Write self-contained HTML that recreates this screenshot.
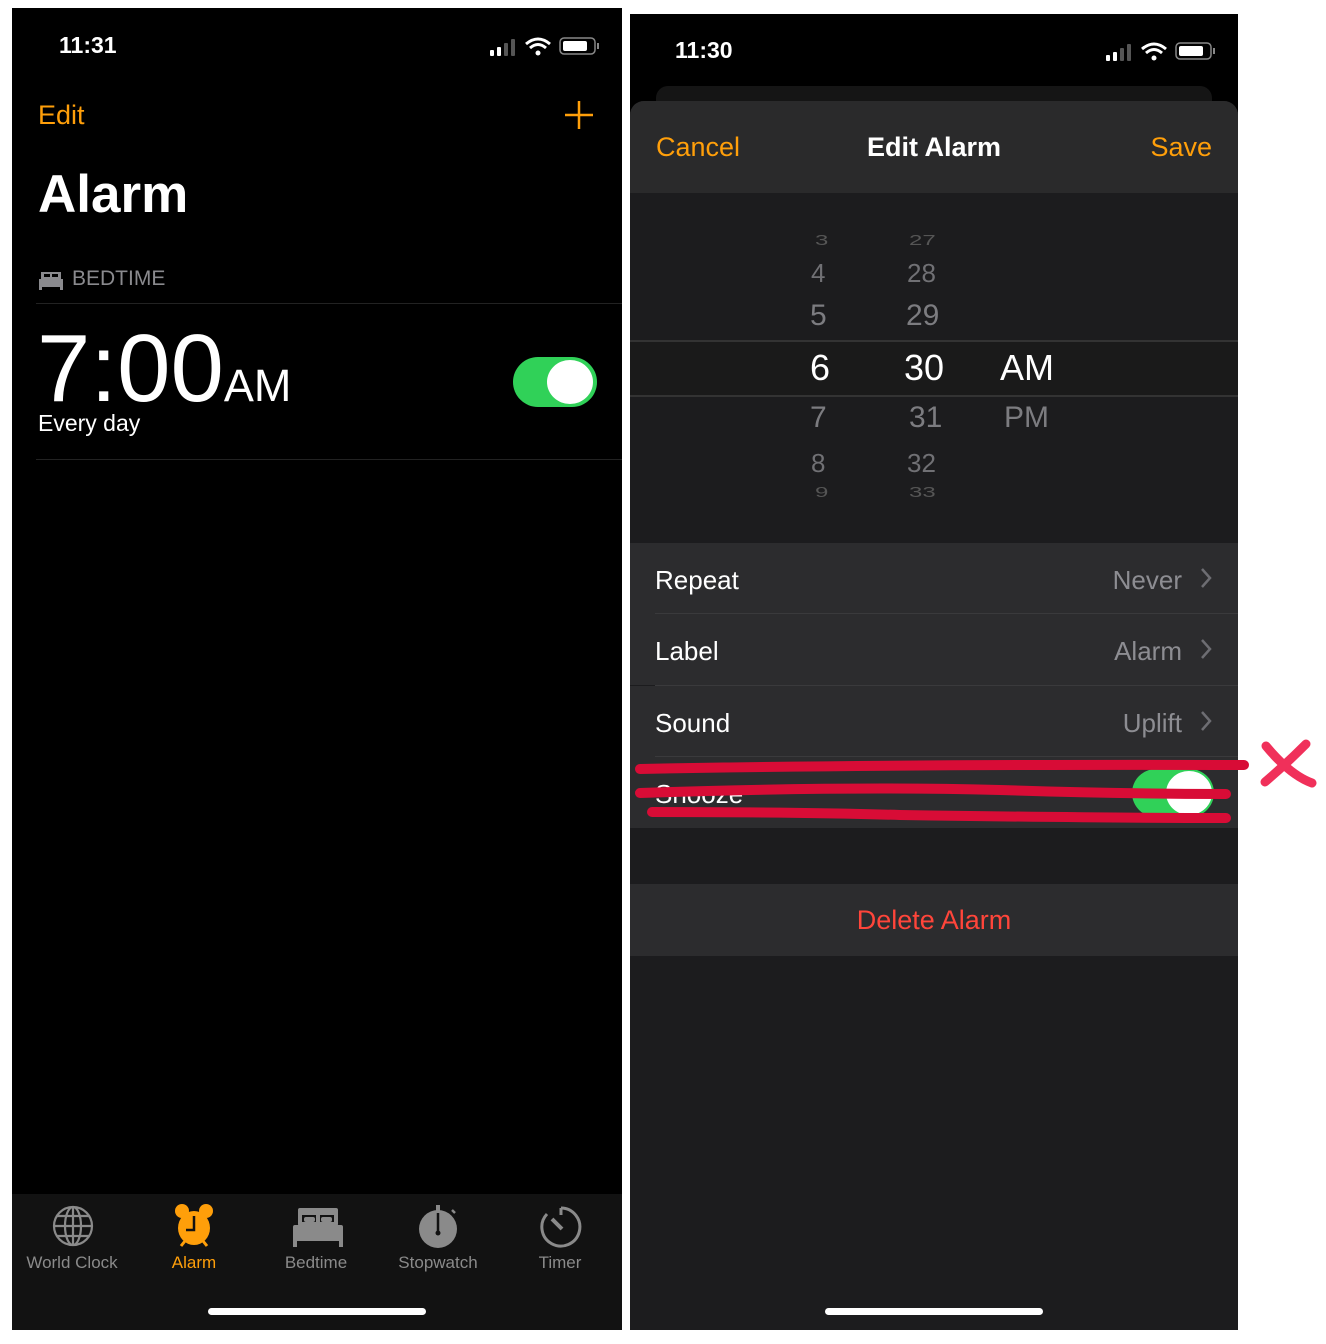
<!DOCTYPE html>
<html><head><meta charset="utf-8">
<style>
*{margin:0;padding:0;box-sizing:border-box}
body{width:1326px;height:1344px;background:#fff;position:relative;overflow:hidden;font-family:"Liberation Sans",sans-serif}
.a{position:absolute}
.ph{position:absolute;background:#000;overflow:hidden}
.t{position:absolute;white-space:nowrap;line-height:1}
.or{color:#ff9f0a}
.pk{color:#8a8a8e;font-size:30px}
.row{position:absolute;left:0;width:608px;height:71px;background:#2c2c2e}
.row .l{position:absolute;left:25px;top:22px;font-size:26px;color:#fff}
.row .v{position:absolute;right:56px;top:22px;font-size:26px;color:#8d8d92}
.row .c{position:absolute;right:26px;top:24px}
.sep{position:absolute;left:25px;right:0;height:1px;background:#3a3a3c}
.tab{position:absolute;top:1245px;font-size:17px;color:#8a8a8a;text-align:center;width:120px}
</style></head><body>

<div class="ph" style="left:12px;top:8px;width:610px;height:1322px">
  <div class="t" style="left:47px;top:26px;font-size:23px;color:#fff;font-weight:bold">11:31</div>
  <svg class="a" style="left:478px;top:28px" width="112" height="22" viewBox="0 0 112 22">
    <rect x="0" y="14" width="4" height="6" rx="1" fill="#fff"/>
    <rect x="7" y="11" width="4" height="9" rx="1" fill="#fff"/>
    <rect x="14" y="7" width="4" height="13" rx="1" fill="#555"/>
    <rect x="21" y="3" width="4" height="17" rx="1" fill="#555"/>
    <path d="M36 8 Q48 -2 60 8" stroke="#fff" stroke-width="3" fill="none"/>
    <path d="M40 12 Q48 5 56 12" stroke="#fff" stroke-width="3" fill="none"/>
    <circle cx="48" cy="17" r="2.5" fill="#fff"/>
    <rect x="70" y="2" width="35" height="16" rx="4" stroke="#888" stroke-width="1.5" fill="none"/>
    <rect x="73" y="5" width="24" height="10" rx="2" fill="#fff"/>
    <rect x="107" y="7" width="2" height="6" fill="#888"/>
  </svg>
  <div class="t or" style="left:26px;top:94px;font-size:27px">Edit</div>
  <svg class="a" style="left:552px;top:92px" width="30" height="30"><path d="M15 1V29M1 15H29" stroke="#ff9f0a" stroke-width="2.5"/></svg>
  <div class="t" style="left:26px;top:160px;font-size:53px;color:#fff;font-weight:bold">Alarm</div>
  <svg class="a" style="left:26px;top:262px" width="26" height="20" viewBox="0 0 26 20"><path d="M3 2h20v7H3z M1 9h24v8H1z" fill="#8a8a8e"/><rect x="1" y="16" width="3" height="4" fill="#8a8a8e"/><rect x="22" y="16" width="3" height="4" fill="#8a8a8e"/><rect x="6" y="4" width="6" height="3" fill="#000"/><rect x="14" y="4" width="6" height="3" fill="#000"/></svg>
  <div class="t" style="left:60px;top:260px;font-size:21px;color:#8a8a8e">BEDTIME</div>
  <div class="a" style="left:24px;top:295px;right:0;height:1px;background:#222"></div>
  <div class="t" style="left:25px;top:313px;font-size:96px;color:#fff;font-weight:normal">7:00<span style="font-size:45px">AM</span></div>
  <div class="t" style="left:26px;top:404px;font-size:23px;color:#fff">Every day</div>
  <div class="a" style="left:501px;top:349px;width:84px;height:50px;border-radius:25px;background:#30d158"></div>
  <div class="a" style="left:535px;top:352px;width:46px;height:44px;border-radius:50%;background:#fff"></div>
  <div class="a" style="left:24px;top:451px;right:0;height:1px;background:#222"></div>

  <div class="a" style="left:0;top:1186px;width:610px;height:136px;background:#121212"></div>
  <svg class="a" style="left:40px;top:1197px" width="42" height="42" viewBox="0 0 42 42" fill="none" stroke="#8a8a8a" stroke-width="2.2"><circle cx="21" cy="21" r="19"/><ellipse cx="21" cy="21" rx="8" ry="19"/><path d="M21 2V40M2 21H40M5 11H37M5 31H37"/></svg>
  <svg class="a" style="left:160px;top:1195px" width="44" height="46" viewBox="0 0 44 46"><circle cx="10" cy="8" r="7" fill="#ff9f0a"/><circle cx="34" cy="8" r="7" fill="#ff9f0a"/><ellipse cx="22" cy="25" rx="16" ry="17" fill="#ff9f0a"/><path d="M9 43l4-5M35 43l-4-5" stroke="#ff9f0a" stroke-width="3"/><path d="M22 13V27H14" stroke="#121212" stroke-width="2.5" fill="none"/></svg>
  <svg class="a" style="left:280px;top:1198px" width="52" height="42" viewBox="0 0 52 42"><rect x="6" y="2" width="40" height="18" rx="2" fill="#8a8a8a"/><rect x="10" y="9" width="14" height="7" fill="#121212"/><rect x="28" y="9" width="14" height="7" fill="#121212"/><rect x="12" y="11" width="11" height="5" rx="2" fill="#8a8a8a"/><rect x="29" y="11" width="11" height="5" rx="2" fill="#8a8a8a"/><rect x="1" y="19" width="50" height="16" rx="2" fill="#8a8a8a"/><rect x="1" y="33" width="4" height="8" fill="#8a8a8a"/><rect x="47" y="33" width="4" height="8" fill="#8a8a8a"/></svg>
  <svg class="a" style="left:405px;top:1195px" width="42" height="46" viewBox="0 0 42 46"><ellipse cx="21" cy="26" rx="19" ry="19" fill="#8a8a8a"/><rect x="19" y="2" width="4" height="6" fill="#8a8a8a"/><path d="M35 7l3 3" stroke="#8a8a8a" stroke-width="2.5"/><path d="M21 10V30" stroke="#121212" stroke-width="2.5"/><circle cx="21" cy="30" r="2.5" fill="#121212"/></svg>
  <svg class="a" style="left:527px;top:1197px" width="44" height="44" viewBox="0 0 44 44" fill="none" stroke="#8a8a8a" stroke-width="3"><path d="M22 3A19 19 0 1 1 8 9"/><path d="M22 3V10"/><path d="M13 14L23 24" stroke-width="4"/></svg>
  <div class="tab" style="left:0px">World Clock</div>
  <div class="tab" style="left:122px;color:#ff9f0a">Alarm</div>
  <div class="tab" style="left:244px">Bedtime</div>
  <div class="tab" style="left:366px">Stopwatch</div>
  <div class="tab" style="left:488px">Timer</div>
  <div class="a" style="left:196px;top:1300px;width:218px;height:7px;border-radius:4px;background:#fff"></div>
</div>

<div class="ph" style="left:630px;top:14px;width:608px;height:1316px">
  <div class="t" style="left:45px;top:25px;font-size:23px;color:#fff;font-weight:bold">11:30</div>
  <svg class="a" style="left:476px;top:27px" width="112" height="22" viewBox="0 0 112 22">
    <rect x="0" y="14" width="4" height="6" rx="1" fill="#fff"/>
    <rect x="7" y="11" width="4" height="9" rx="1" fill="#fff"/>
    <rect x="14" y="7" width="4" height="13" rx="1" fill="#555"/>
    <rect x="21" y="3" width="4" height="17" rx="1" fill="#555"/>
    <path d="M36 8 Q48 -2 60 8" stroke="#fff" stroke-width="3" fill="none"/>
    <path d="M40 12 Q48 5 56 12" stroke="#fff" stroke-width="3" fill="none"/>
    <circle cx="48" cy="17" r="2.5" fill="#fff"/>
    <rect x="70" y="2" width="35" height="16" rx="4" stroke="#888" stroke-width="1.5" fill="none"/>
    <rect x="73" y="5" width="24" height="10" rx="2" fill="#fff"/>
    <rect x="107" y="7" width="2" height="6" fill="#888"/>
  </svg>
  <div class="a" style="left:26px;top:72px;width:556px;height:40px;border-radius:12px 12px 0 0;background:#151515"></div>
  <div class="a" style="left:0;top:87px;width:608px;height:1229px;border-radius:14px 14px 0 0;background:#1c1c1e;overflow:hidden">
    <div class="a" style="left:0;top:0;width:608px;height:92px;background:#2a2a2b"></div>
    <div class="t or" style="left:26px;top:33px;font-size:27px">Cancel</div>
    <div class="t" style="left:0;width:608px;text-align:center;top:33px;font-size:27px;color:#fff;font-weight:bold">Edit Alarm</div>
    <div class="t or" style="right:26px;top:33px;font-size:27px">Save</div>
    <div class="t" style="left:185px;top:128px;font-size:24px;color:#555;transform:scaleY(.6)">3</div>
    <div class="t" style="left:279px;top:128px;font-size:24px;color:#555;transform:scaleY(.6)">27</div>
    <div class="t pk" style="left:181px;top:159px;font-size:26px;color:#707074">4</div>
    <div class="t pk" style="left:277px;top:159px;font-size:26px;color:#707074">28</div>
    <div class="t pk" style="left:180px;top:200px;color:#7c7c80">5</div>
    <div class="t pk" style="left:276px;top:200px;color:#7c7c80">29</div>
    <div class="a" style="left:0;top:239px;width:608px;height:2px;background:#333"></div>
    <div class="a" style="left:0;top:241px;width:608px;height:53px;background:#1a1a1a"></div>
    <div class="a" style="left:0;top:294px;width:608px;height:2px;background:#333"></div>
    <div class="t" style="left:180px;top:249px;font-size:36px;color:#fff">6</div>
    <div class="t" style="left:274px;top:249px;font-size:36px;color:#fff">30</div>
    <div class="t" style="left:370px;top:249px;font-size:36px;color:#fff">AM</div>
    <div class="t pk" style="left:180px;top:302px;color:#7c7c80">7</div>
    <div class="t pk" style="left:279px;top:302px;color:#7c7c80">31</div>
    <div class="t pk" style="left:374px;top:302px;color:#7c7c80">PM</div>
    <div class="t pk" style="left:181px;top:349px;font-size:26px;color:#707074">8</div>
    <div class="t pk" style="left:277px;top:349px;font-size:26px;color:#707074">32</div>
    <div class="t" style="left:185px;top:380px;font-size:24px;color:#555;transform:scaleY(.6)">9</div>
    <div class="t" style="left:279px;top:380px;font-size:24px;color:#555;transform:scaleY(.6)">33</div>
    <div class="row" style="top:442px"><div class="l">Repeat</div><div class="v">Never</div><svg class="c" width="12" height="22"><path d="M2 2L10 11L2 20" stroke="#6d6d72" stroke-width="2.5" fill="none"/></svg></div>
    <div class="sep" style="top:512px"></div>
    <div class="row" style="top:513px"><div class="l">Label</div><div class="v">Alarm</div><svg class="c" width="12" height="22"><path d="M2 2L10 11L2 20" stroke="#6d6d72" stroke-width="2.5" fill="none"/></svg></div>
    <div class="sep" style="top:584px"></div>
    <div class="row" style="top:585px"><div class="l">Sound</div><div class="v">Uplift</div><svg class="c" width="12" height="22"><path d="M2 2L10 11L2 20" stroke="#6d6d72" stroke-width="2.5" fill="none"/></svg></div>
    <div class="sep" style="top:655px"></div>
    <div class="row" style="top:656px"><div class="l" style="top:22px">Snooze</div>
      <div class="a" style="left:502px;top:12px;width:82px;height:48px;border-radius:24px;background:#30d158"></div>
      <div class="a" style="left:536px;top:14px;width:46px;height:44px;border-radius:50%;background:#fff"></div>
    </div>
    <div class="a" style="left:0;top:783px;width:608px;height:72px;background:#2c2c2e"></div>
    <div class="t" style="left:0;width:608px;text-align:center;top:806px;font-size:27px;color:#ff453a">Delete Alarm</div>
  </div>
  <div class="a" style="left:195px;top:1294px;width:218px;height:7px;border-radius:4px;background:#fff"></div>
</div>

<svg class="a" style="left:0;top:0" width="1326" height="1344">
  <g stroke="#d80c36" stroke-width="10" stroke-linecap="round" fill="none">
    <path d="M640 769 Q900 764 1244 765"/>
    <path d="M640 793 Q850 786 1000 790 Q1120 794 1226 794"/>
    <path d="M652 812 Q800 812 900 815 Q1100 818 1226 818"/>
  </g>
  <g stroke="#f0305a" stroke-width="9" stroke-linecap="round" fill="none">
    <path d="M1266 746 Q1290 775 1312 783"/>
    <path d="M1306 744 Q1285 765 1265 782"/>
  </g>
</svg>
</body></html>
